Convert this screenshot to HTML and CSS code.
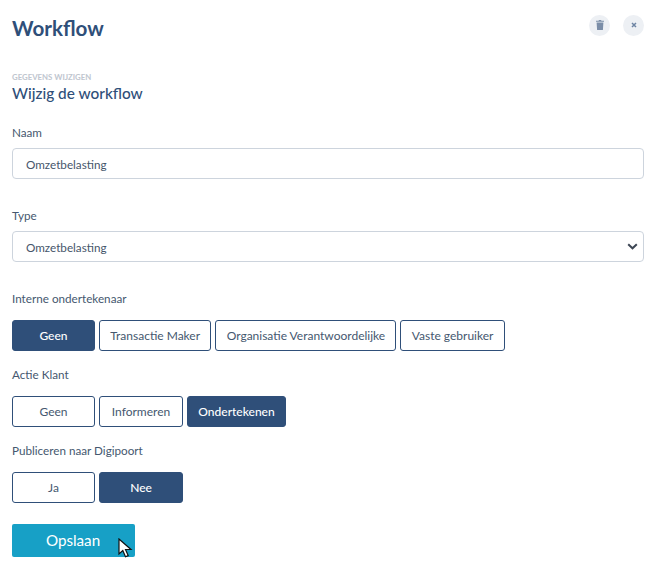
FILE: index.html
```html
<!DOCTYPE html>
<html lang="en">
<head>
    <meta charset="UTF-8">
    <title>Workflow</title>
    <link rel="stylesheet" href="styles.css">
</head>
<body>
    <div id="wrap">
        <div class="top">
            <h1>Workflow</h1>
            <div class="tools">
                <button class="round">
                    <svg width="8" height="10" viewBox="0 0 8 10"><path d="M3 0h2l.5.7H8v1H0v-1h2.500zM.6 2.400h6.800L6.900 10H1.100z" fill="#7b8ea8"/></svg>
                </button>
                <button class="round">
                    <svg width="6" height="6" viewBox="0 0 6 6"><path d="M1 1l4 4M5 1L1 5" stroke="#6d84a3" stroke-width="1.500" fill="none"/></svg>
                </button>
            </div>
        </div>
        <p class="sub">GEGEVENS WIJZIGEN</p>
        <h2>Wijzig de workflow</h2>

        <label class="naam">Naam</label>
        <div class="field">Omzetbelasting</div>

        <label class="type">Type</label>
        <div class="field select">
            Omzetbelasting
            <svg width="11" height="7" viewBox="0 0 11 7"><path d="M1.200 1.300l4.300 4 4.300-4" stroke="#3d4654" stroke-width="2" fill="none"/></svg>
        </div>

        <label class="intern">Interne ondertekenaar</label>
        <div class="btns">
            <button class="active w83">Geen</button>
            <button class="pad">Transactie Maker</button>
            <button class="pad">Organisatie Verantwoordelijke</button>
            <button class="pad">Vaste gebruiker</button>
        </div>

        <label class="actie">Actie Klant</label>
        <div class="btns">
            <button class="w83">Geen</button>
            <button class="w85">Informeren</button>
            <button class="active pad">Ondertekenen</button>
        </div>

        <label class="actie">Publiceren naar Digipoort</label>
        <div class="btns">
            <button class="w83">Ja</button>
            <button class="active w85">Nee</button>
        </div>

        <button class="save">
            Opslaan
            <svg class="cursor" width="15" height="20" viewBox="0 0 15 20"><path d="M1 1v15l3.800-3.500 2.700 6.300 2.700-1.200-2.700-6.100H13z" fill="#fff" stroke="#111" stroke-width="1.200"/></svg>
        </button>
    </div>
</body>
</html>
```
FILE: styles.css
```css
*{margin:0;padding:0;box-sizing:border-box;}
body{
    background-color:#fff;
    font-family:Lato,"Noto Sans",sans-serif;
    font-size:11.700px;
    color:#45586f;
}
#wrap{
    width:651px;
    height:567px;
    padding:0 7px 0 12px;
}
.top{
    display:flex;
    justify-content:space-between;
    align-items:center;
    height:50px;
    padding-top:6px;
}
h1{
    font-size:20.600px;
    font-weight:700;
    color:#2f4f79;
}
.tools{display:flex;gap:13px;}
.round{
    display:flex;
    align-items:center;
    justify-content:center;
    width:21px;
    height:21px;
    border:0;
    border-radius:50%;
    background-color:#edf0f4;
    margin-top:-6px;
}
.sub{
    margin-top:23px;
    font-size:7.800px;
    line-height:8px;
    font-weight:700;
    color:#c0c6cf;
}
h2{
    margin-top:2px;
    font-size:15.400px;
    line-height:20px;
    font-weight:500;
    color:#2f4f79;
}
label{display:block;line-height:16px;padding-bottom:1px;}
.naam{margin-top:21px;}
.type{margin-top:28px;}
.intern{margin-top:28px;}
.actie{margin-top:15px;}
.field{
    display:flex;
    align-items:center;
    justify-content:space-between;
    height:31px;
    margin-top:7px;
    padding:0 13px;
    border:1px solid #cdd4dd;
    border-radius:4px;
    color:#46566b;
    width:632px;
}
.select{padding-right:5px;}
.btns{
    display:flex;
    gap:4px;
    margin-top:13px;
}
.btns button{
    height:31px;
    border:1px solid #2f4f79;
    border-radius:3px;
    background-color:#fff;
    color:#45586f;
    font-family:inherit;
    font-size:12px;
}
.btns .active{background-color:#2f4f79;color:#fff;font-weight:500;}
.w83{width:83px;}
.w85{width:84px;}
.pad{padding:0 10.300px;}
.save{
    position:relative;
    display:block;
    width:123px;
    height:33px;
    margin-top:21px;
    padding:0 1px 1px 0;
    border:0;
    border-radius:2px;
    background-color:#17a0c6;
    color:#fff;
    font-family:inherit;
    font-size:15.200px;
}
.cursor{
    position:absolute;
    left:106px;
    top:14px;
}
```
